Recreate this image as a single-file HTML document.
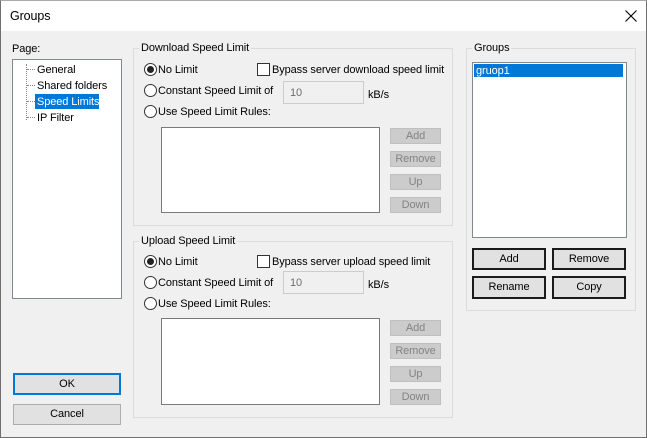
<!DOCTYPE html>
<html><head><meta charset="utf-8"><style>
*{box-sizing:border-box;margin:0;padding:0}
body{width:647px;height:438px;position:relative;background:#f0f0f0;font-family:"Liberation Sans",sans-serif;font-size:11px;letter-spacing:-0.1px;color:#000;overflow:hidden}
.a{position:absolute;white-space:nowrap}
#win{position:absolute;left:0;top:0;width:647px;height:438px;border:1px solid #6f6f6f;border-top:1px solid #aaa}
#title{position:absolute;left:0;top:0;width:647px;height:31px;background:#fff}
.box{position:absolute;background:#fff;border:1px solid #828790}
.grp{position:absolute;border:1px solid #dcdcdc}
.lbl{position:absolute;background:#f0f0f0;padding:0 2px;top:-8px;left:5px;line-height:14px}
.rad{position:absolute;width:13px;height:13px;border:1px solid #333;border-radius:50%;background:#fff}
.rad.on::after{content:"";position:absolute;left:2px;top:2px;width:7px;height:7px;border-radius:50%;background:#222}
.chk{position:absolute;width:13px;height:13px;border:1px solid #333;background:#fff}
.dbtn{position:absolute;width:51px;height:16px;background:#ccc;border:1px solid #bfbfbf;color:#838383;text-align:center;line-height:14px}
.btn{position:absolute;background:#e1e1e1;border:1px solid #adadad;text-align:center}
.btn.k{border:2px solid #1b1b1b}
.inp{position:absolute;width:81px;height:23px;border:1px solid #ccc;background:#f0f0f0;color:#6d6d6d;padding:5px 0 0 6px}
.t{position:absolute;white-space:nowrap;line-height:14px}
.dot{position:absolute;border-top:1px dotted #888}
</style></head><body>
<div id="title"></div>
<div id="win"></div>
<div class="t" style="left:10px;top:9px;font-size:12.5px">Groups</div>
<svg class="a" style="left:625px;top:10px" width="12" height="12"><path d="M0.5 0.5L11.5 11.5M11.5 0.5L0.5 11.5" stroke="#000" stroke-width="1.1"/></svg>

<div class="t" style="left:12px;top:42px">Page:</div>
<div class="box" style="left:12px;top:59px;width:110px;height:240px"></div>
<div class="a" style="left:26px;top:64px;height:56px;border-left:1px dotted #888"></div>
<div class="dot" style="left:27px;top:69px;width:8px"></div>
<div class="dot" style="left:27px;top:85px;width:8px"></div>
<div class="dot" style="left:27px;top:101px;width:8px"></div>
<div class="dot" style="left:27px;top:117px;width:8px"></div>
<div class="t" style="left:37px;top:63px">General</div>
<div class="t" style="left:37px;top:79px">Shared folders</div>
<div class="a" style="left:35px;top:94px;width:64px;height:15px;background:#0078d7"></div>
<div class="t" style="left:37px;top:95px;color:#fff">Speed Limits</div>
<div class="t" style="left:37px;top:111px">IP Filter</div>

<div class="btn" style="left:13px;top:373px;width:108px;height:22px;border:2px solid #0078d7;line-height:18px">OK</div>
<div class="btn" style="left:13px;top:404px;width:108px;height:21px;line-height:19px">Cancel</div>

<!-- Download -->
<div class="grp" style="left:133px;top:48px;width:320px;height:178px"><div class="lbl">Download Speed Limit</div></div>
<div class="rad on" style="left:144px;top:63px"></div><div class="t" style="left:158px;top:63px">No Limit</div>
<div class="chk" style="left:257px;top:63px"></div><div class="t" style="left:272px;top:63px">Bypass server download speed limit</div>
<div class="rad" style="left:144px;top:84px"></div><div class="t" style="left:158px;top:84px">Constant Speed Limit of</div>
<div class="inp" style="left:283px;top:81px">10</div><div class="t" style="left:368px;top:88px">kB/s</div>
<div class="rad" style="left:144px;top:105px"></div><div class="t" style="left:158px;top:105px">Use Speed Limit Rules:</div>
<div class="box" style="left:161px;top:127px;width:219px;height:86px;border-color:#7a7a7a"></div>
<div class="dbtn" style="left:390px;top:128px">Add</div>
<div class="dbtn" style="left:390px;top:151px">Remove</div>
<div class="dbtn" style="left:390px;top:174px">Up</div>
<div class="dbtn" style="left:390px;top:197px">Down</div>

<!-- Upload -->
<div class="grp" style="left:133px;top:241px;width:320px;height:177px"><div class="lbl">Upload Speed Limit</div></div>
<div class="rad on" style="left:144px;top:255px"></div><div class="t" style="left:158px;top:255px">No Limit</div>
<div class="chk" style="left:257px;top:255px"></div><div class="t" style="left:272px;top:255px">Bypass server upload speed limit</div>
<div class="rad" style="left:144px;top:276px"></div><div class="t" style="left:158px;top:276px">Constant Speed Limit of</div>
<div class="inp" style="left:283px;top:271px">10</div><div class="t" style="left:368px;top:278px">kB/s</div>
<div class="rad" style="left:144px;top:297px"></div><div class="t" style="left:158px;top:297px">Use Speed Limit Rules:</div>
<div class="box" style="left:161px;top:318px;width:219px;height:87px;border-color:#7a7a7a"></div>
<div class="dbtn" style="left:390px;top:320px">Add</div>
<div class="dbtn" style="left:390px;top:343px">Remove</div>
<div class="dbtn" style="left:390px;top:366px">Up</div>
<div class="dbtn" style="left:390px;top:389px">Down</div>

<!-- Groups -->
<div class="grp" style="left:466px;top:48px;width:170px;height:263px"><div class="lbl">Groups</div></div>
<div class="box" style="left:472px;top:62px;width:155px;height:176px"></div>
<div class="a" style="left:474px;top:64px;width:149px;height:13px;background:#0078d7"></div>
<div class="t" style="left:476px;top:64px;color:#fff">gruop1</div>
<div class="btn k" style="left:472px;top:248px;width:74px;height:22px;line-height:18px">Add</div>
<div class="btn k" style="left:552px;top:248px;width:74px;height:22px;line-height:18px">Remove</div>
<div class="btn k" style="left:472px;top:276px;width:74px;height:23px;line-height:19px">Rename</div>
<div class="btn k" style="left:552px;top:276px;width:74px;height:23px;line-height:19px">Copy</div>
</body></html>
